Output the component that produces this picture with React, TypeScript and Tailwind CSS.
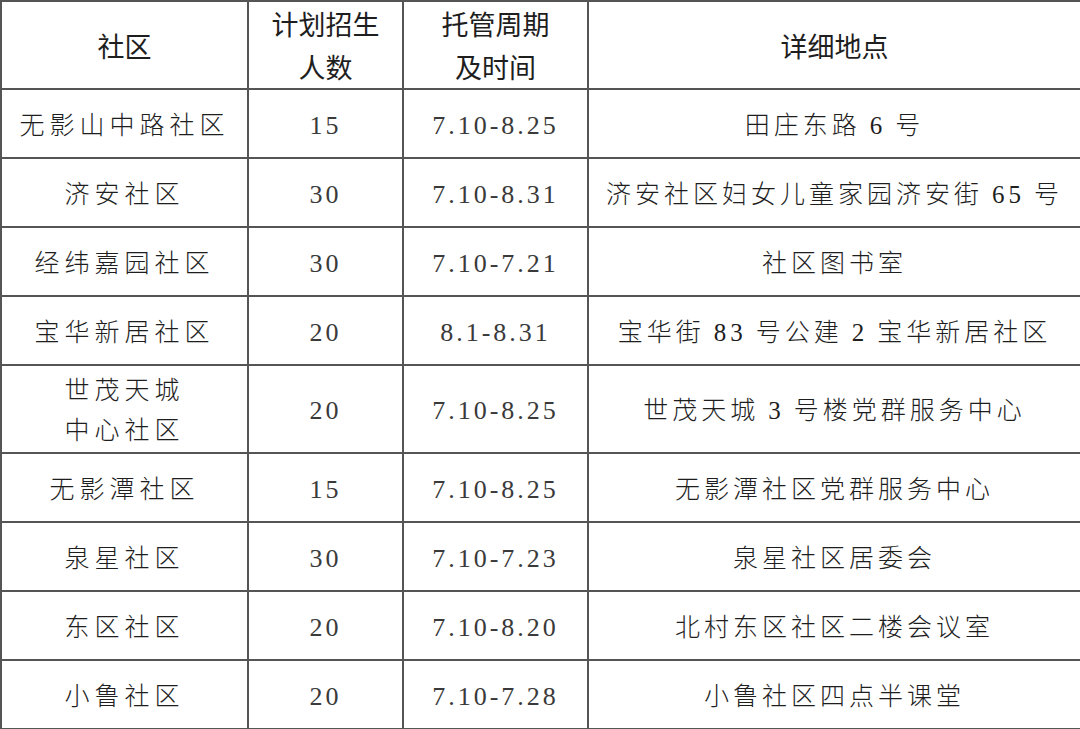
const rows = [
  { name: ['无影山中路社区'], count: '15', period: '7.10-8.25', place: '田庄东路 6 号' },
  { name: ['济安社区'], count: '30', period: '7.10-8.31', place: '济安社区妇女儿童家园济安街 65 号' },
  { name: ['经纬嘉园社区'], count: '30', period: '7.10-7.21', place: '社区图书室' },
  { name: ['宝华新居社区'], count: '20', period: '8.1-8.31', place: '宝华街 83 号公建 2 宝华新居社区' },
  { name: ['世茂天城', '中心社区'], count: '20', period: '7.10-8.25', place: '世茂天城 3 号楼党群服务中心' },
  { name: ['无影潭社区'], count: '15', period: '7.10-8.25', place: '无影潭社区党群服务中心' },
  { name: ['泉星社区'], count: '30', period: '7.10-7.23', place: '泉星社区居委会' },
  { name: ['东区社区'], count: '20', period: '7.10-8.20', place: '北村东区社区二楼会议室' },
  { name: ['小鲁社区'], count: '20', period: '7.10-7.28', place: '小鲁社区四点半课堂' },
];

const cell = 'border-2 border-[#555555] text-center align-middle p-0';

// thin spaces around the numbers inside the addresses
const thin = (s: string) => s.replace(/ /g, '\u2009');

export default function App() {
  return (
    <div className="w-[1080px] h-[729px] bg-white overflow-hidden">
      <table className="w-[1080px] table-fixed border-collapse text-[#1e1e1e]">
        <colgroup>
          <col className="w-[247px]" />
          <col className="w-[155px]" />
          <col className="w-[185px]" />
          <col className="w-[493px]" />
        </colgroup>
        <thead>
          <tr className="h-[88px] font-['Noto_Sans_CJK_SC',sans-serif] text-[27px] leading-[43px]">
            <th className={`${cell} font-normal`}>社区</th>
            <th className={`${cell} font-normal`}>
              计划招生
              <br />
              人数
            </th>
            <th className={`${cell} font-normal`}>
              托管周期
              <br />
              及时间
            </th>
            <th className={`${cell} font-normal`}>详细地点</th>
          </tr>
        </thead>
        <tbody className="font-['Liberation_Serif','Noto_Sans_CJK_SC',serif] font-light text-[25px] leading-[40px]">
          {rows.map((r, i) => (
            <tr key={i} className={r.name.length > 1 ? 'h-[88px]' : 'h-[69px]'}>
              <td className={`${cell} tracking-[5px] pt-1`}>
                {r.name.map((n, j) => (
                  <div key={j}>{n}</div>
                ))}
              </td>
              <td className={`${cell} text-[26px] tracking-[3px] pt-1 text-[#3a3a3a]`}>{r.count}</td>
              <td className={`${cell} text-[26px] tracking-[3px] pt-1 text-[#3a3a3a]`}>{r.period}</td>
              <td className={`${cell} tracking-[4px] pt-1 whitespace-nowrap`}>{thin(r.place)}</td>
            </tr>
          ))}
        </tbody>
      </table>
    </div>
  );
}
